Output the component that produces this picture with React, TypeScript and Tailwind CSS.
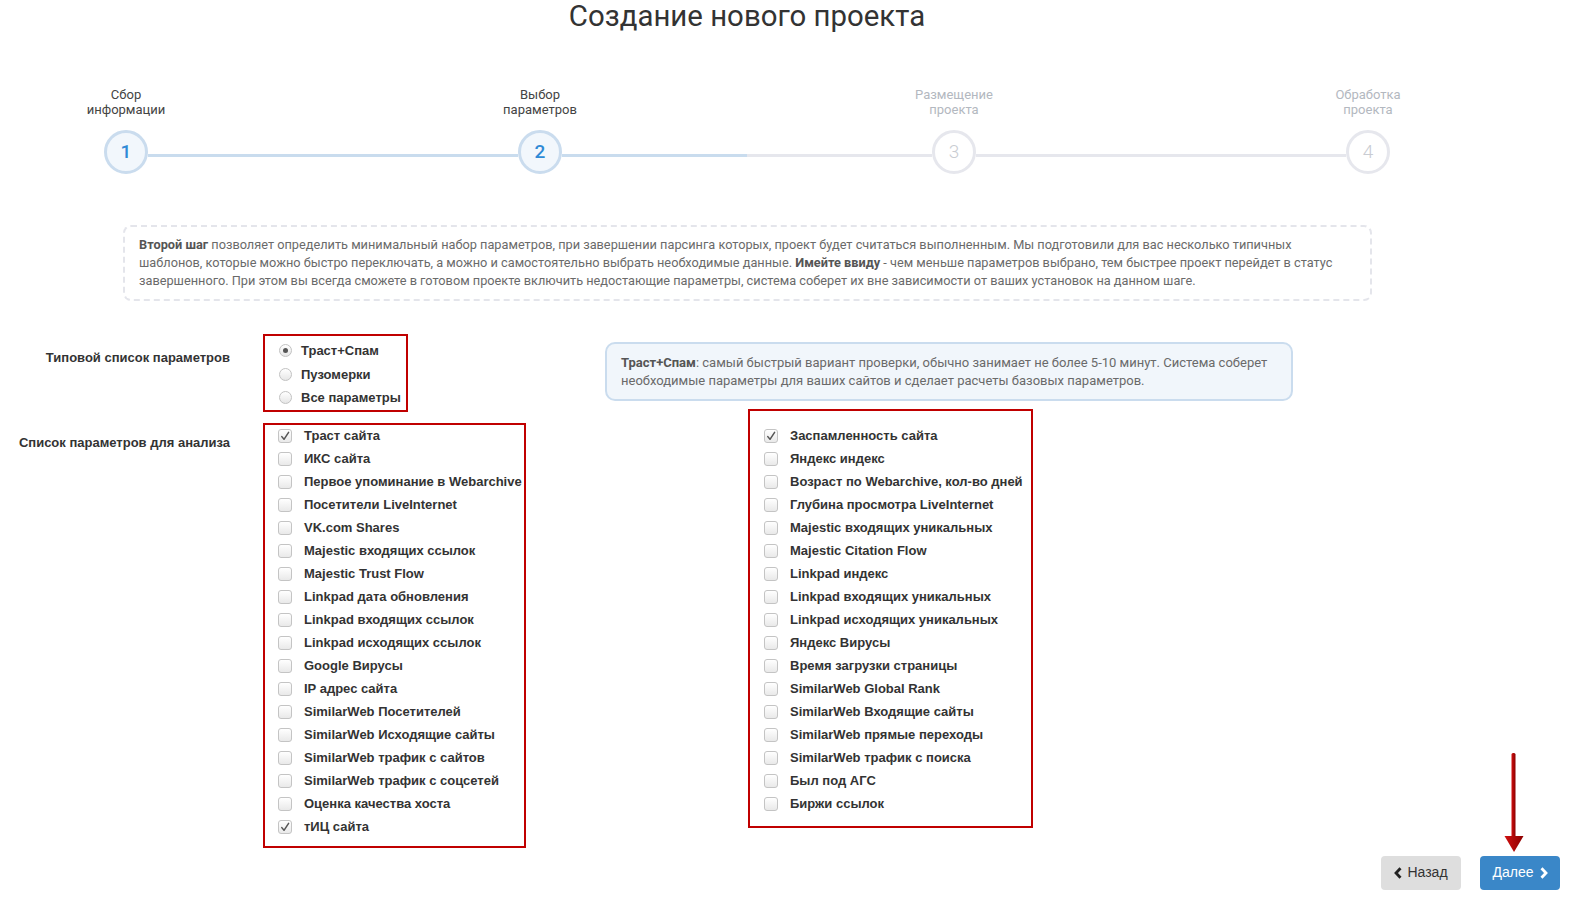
import React from "react";

const LEFT_PARAMS = [
  "Траст сайта",
  "ИКС сайта",
  "Первое упоминание в Webarchive",
  "Посетители LiveInternet",
  "VK.com Shares",
  "Majestic входящих ссылок",
  "Majestic Trust Flow",
  "Linkpad дата обновления",
  "Linkpad входящих ссылок",
  "Linkpad исходящих ссылок",
  "Google Вирусы",
  "IP адрес сайта",
  "SimilarWeb Посетителей",
  "SimilarWeb Исходящие сайты",
  "SimilarWeb трафик с сайтов",
  "SimilarWeb трафик с соцсетей",
  "Оценка качества хоста",
  "тИЦ сайта",
];

const RIGHT_PARAMS = [
  "Заспамленность сайта",
  "Яндекс индекс",
  "Возраст по Webarchive, кол-во дней",
  "Глубина просмотра LiveInternet",
  "Majestic входящих уникальных",
  "Majestic Citation Flow",
  "Linkpad индекс",
  "Linkpad входящих уникальных",
  "Linkpad исходящих уникальных",
  "Яндекс Вирусы",
  "Время загрузки страницы",
  "SimilarWeb Global Rank",
  "SimilarWeb Входящие сайты",
  "SimilarWeb прямые переходы",
  "SimilarWeb трафик с поиска",
  "Был под АГС",
  "Биржи ссылок",
];

const CHECKED = new Set(["Траст сайта", "тИЦ сайта", "Заспамленность сайта"]);

const STEPS = [
  { top: "Сбор", bottom: "информации", n: 1, active: true },
  { top: "Выбор", bottom: "параметров", n: 2, active: true },
  { top: "Размещение", bottom: "проекта", n: 3, active: false },
  { top: "Обработка", bottom: "проекта", n: 4, active: false },
];

function StepCircle({ n, active }: { n: number; active: boolean }) {
  return (
    <div
      className={
        active
          ? "w-[44px] h-[44px] shrink-0 rounded-full border-[3px] border-[#cadcee] bg-[#f2f7fc] flex items-center justify-center text-[19px] font-medium text-[#2f8ad6]"
          : "w-[44px] h-[44px] shrink-0 rounded-full border-[3px] border-[#e6e7ed] bg-white flex items-center justify-center text-[19px] font-light text-[#c9ccd2]"
      }
    >
      {n}
    </div>
  );
}

function Checkbox({ checked }: { checked: boolean }) {
  return (
    <span className="w-[14px] h-[14px] shrink-0 rounded-[3px] border border-[#c4c4c4] bg-gradient-to-b from-white to-[#e9e9e9] flex items-center justify-center">
      {checked && (
        <svg width="10" height="10" viewBox="0 0 10 10">
          <path d="M1.8 5.6 L4 8.3 L8.6 1.4" fill="none" stroke="#555" strokeWidth="1.5" strokeLinecap="round" strokeLinejoin="round" />
        </svg>
      )}
    </span>
  );
}

function Radio({ checked }: { checked: boolean }) {
  return (
    <span className="w-[13px] h-[13px] shrink-0 rounded-full border border-[#c2c2c2] bg-gradient-to-b from-white to-[#e6e6e6] flex items-center justify-center">
      {checked && <span className="w-[5px] h-[5px] rounded-full bg-[#555]" />}
    </span>
  );
}

function ParamRow({ label }: { label: string }) {
  return (
    <div className="h-[23px] flex items-center gap-[12px]">
      <Checkbox checked={CHECKED.has(label)} />
      <span className="whitespace-nowrap">{label}</span>
    </div>
  );
}

export default function App() {
  return (
    <div className="relative w-[1571px] h-[898px] bg-white overflow-hidden font-['Roboto',sans-serif]">
      <h1 className="w-[1494px] text-center text-[29.4px] leading-[33px] font-normal text-[#333]">
        Создание нового проекта
      </h1>

      {/* wizard steps */}
      <div className="mt-[54px] ml-[104px] w-[1286px]">
        <div className="flex justify-between">
          {STEPS.map((s) => (
            <div key={s.n} className="w-[44px] flex justify-center">
              <div
                className={
                  "shrink-0 whitespace-nowrap text-center text-[13px] leading-[15px] " +
                  (s.active ? "text-[#444]" : "text-[#b3b8c0]")
                }
              >
                {s.top}
                <br />
                {s.bottom}
              </div>
            </div>
          ))}
        </div>
        <div className="mt-[13px] flex items-center">
          <StepCircle n={1} active />
          <div className="flex-1 h-[3px] mt-[7px] bg-[#c9dcee]" />
          <StepCircle n={2} active />
          <div className="flex-1 h-[3px] mt-[7px] flex">
            <div className="flex-1 bg-[#c9dcee]" />
            <div className="flex-1 bg-[#e6e7ed]" />
          </div>
          <StepCircle n={3} active={false} />
          <div className="flex-1 h-[3px] mt-[7px] bg-[#e6e7ed]" />
          <StepCircle n={4} active={false} />
        </div>
      </div>

      {/* step description */}
      <div className="mt-[51px] ml-[123px] w-[1249px] border-2 border-dashed border-[#e4e5eb] rounded-[8px] px-[14px] py-[9px] text-[12.75px] leading-[18px] text-[#6a6a6a]">
        <div className="whitespace-nowrap">
          <b className="font-bold text-[#555]">Второй шаг</b> позволяет определить минимальный набор параметров, при завершении парсинга которых, проект будет считаться выполненным. Мы подготовили для вас несколько типичных
        </div>
        <div className="whitespace-nowrap">
          шаблонов, которые можно быстро переключать, а можно и самостоятельно выбрать необходимые данные. <b className="font-bold text-[#555]">Имейте ввиду</b> - чем меньше параметров выбрано, тем быстрее проект перейдет в статус
        </div>
        <div className="whitespace-nowrap">
          завершенного. При этом вы всегда сможете в готовом проекте включить недостающие параметры, система соберет их вне зависимости от ваших установок на данном шаге.
        </div>
      </div>

      {/* parameters form */}
      <div className="mt-[33px] flex items-start font-['Liberation_Sans',Arial,sans-serif] text-[13px] font-bold text-[#333]">
        <div className="flex flex-col">
          <div className="flex items-start">
            <div className="w-[230px] text-right leading-[16px] pt-[16px]">Типовой список параметров</div>
            <div className="ml-[33px] w-[145px] border-2 border-[#c00000] pt-[3px] pl-[14px]">
              {["Траст+Спам", "Пузомерки", "Все параметры"].map((r, i) => (
                <div key={r} className="h-[23.5px] flex items-center gap-[9px]">
                  <Radio checked={i === 0} />
                  <span className="whitespace-nowrap">{r}</span>
                </div>
              ))}
            </div>
          </div>
          <div className="mt-[12px] flex items-start">
            <div className="w-[230px] text-right leading-[16px] pt-[11px]">Список параметров для анализа</div>
            <div className="ml-[33px] w-[263px] border-2 border-[#c00000] pl-[13px] pb-[7px] -mt-px">
              {LEFT_PARAMS.map((p) => (
                <ParamRow key={p} label={p} />
              ))}
            </div>
          </div>
        </div>

        <div className="ml-[79px] flex flex-col">
          <div className="mt-[8px] w-[688px] border-2 border-[#cadcee] rounded-[10px] bg-[#f1f6fb] pl-[14px] pt-[10px] pb-[9px] font-['Roboto',sans-serif] font-normal text-[13px] leading-[18px] text-[#6a6a6a]">
            <div className="whitespace-nowrap">
              <b className="font-bold text-[#555]">Траст+Спам</b>: самый быстрый вариант проверки, обычно занимает не более 5-10 минут. Система соберет
            </div>
            <div className="whitespace-nowrap">необходимые параметры для ваших сайтов и сделает расчеты базовых параметров.</div>
          </div>
          <div className="mt-[8px] ml-[143px] w-[285px] border-2 border-[#c00000] pl-[14px] pt-[13.5px] pb-[10.5px]">
            {RIGHT_PARAMS.map((p) => (
              <ParamRow key={p} label={p} />
            ))}
          </div>
        </div>
      </div>

      {/* wizard navigation */}
      <div className="mt-[8px] pr-[11px] flex justify-end gap-[19px] font-['Liberation_Sans',Arial,sans-serif] text-[14px]">
        <button className="w-[80px] h-[34px] rounded-[4px] bg-[#dedede] text-[#333] flex items-center justify-center gap-[5px]">
          <svg width="8" height="12" viewBox="0 0 8 12">
            <path d="M6.5 1.2 L2 6 L6.5 10.8" fill="none" stroke="#222" strokeWidth="2.8" />
          </svg>
          <span>Назад</span>
        </button>
        <button className="w-[80px] h-[34px] rounded-[4px] bg-[#3a87c8] text-white flex items-center justify-center gap-[6px]">
          <span>Далее</span>
          <svg width="8" height="12" viewBox="0 0 8 12">
            <path d="M1.5 1.2 L6 6 L1.5 10.8" fill="none" stroke="#fff" strokeWidth="2.8" />
          </svg>
        </button>
      </div>

      {/* pointer arrow */}
      <svg className="absolute left-[1503px] top-[752px]" width="22" height="102" viewBox="0 0 22 102">
        <defs>
          <linearGradient id="shaft" x1="0" x2="1" y1="0" y2="0">
            <stop offset="0" stopColor="#d01010" />
            <stop offset="1" stopColor="#8c0000" />
          </linearGradient>
        </defs>
        <rect x="8.5" y="1" width="4" height="86" rx="1.5" fill="url(#shaft)" />
        <path d="M1.5 84 L20.5 84 L11 100 Z" fill="url(#shaft)" />
      </svg>
    </div>
  );
}
